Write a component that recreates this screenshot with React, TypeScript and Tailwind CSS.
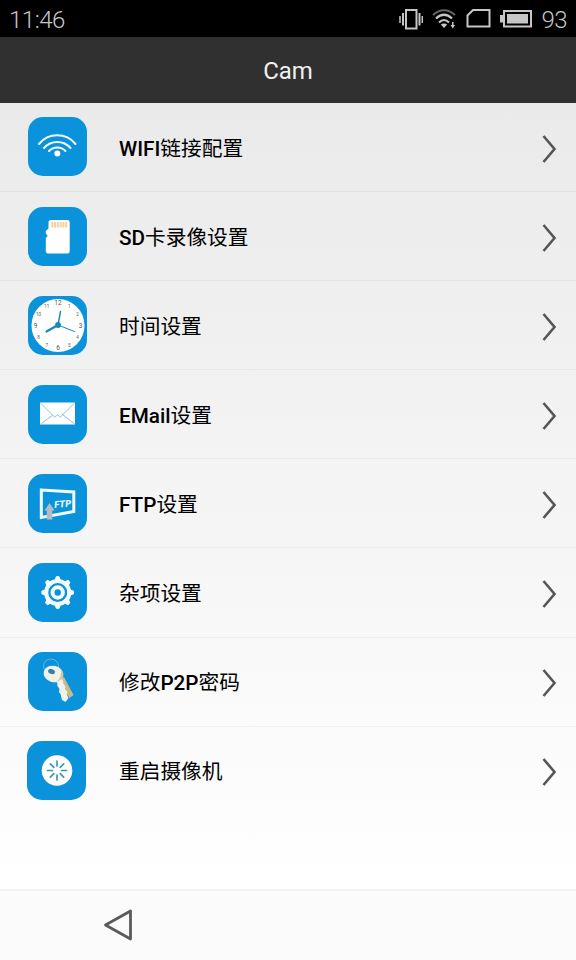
import type { ReactNode } from 'react';

const WifiIcon = () => (
  <g fill="none" stroke="#f4fbff" strokeWidth="2" strokeLinecap="round">
    <path d="M11 27A23.500 23.500 0 0 1 47.500 27" />
    <path d="M16 31A17.500 17.500 0 0 1 42.500 31" />
    <path d="M21 34A11.500 11.500 0 0 1 37.500 34" />
    <circle cx="29.300" cy="36.500" r="3" fill="#fff" stroke="none" />
  </g>
);

const SdIcon = () => (
  <g>
    <path
      d="M23 13h16.500a2.200 2.200 0 0 1 2.200 2.200v29a2.200 2.200 0 0 1-2.200 2.200H20a2.200 2.200 0 0 1-2.200-2.200V31l1.500-1.500v-1.500l-1.500-1.500V24l2.700-2.500v-6a2.500 2.500 0 0 1 2.500-2.500z"
      fill="#fff"
    />
    <path d="M24.200 15v5.500M27 15v5.500M29.800 15v5.500M32.600 15v5.500M35.400 15v5.500M38.200 15v5.500" stroke="#f7cf9f" strokeWidth="2" />
  </g>
);

const horas = [12, 1, 2, 3, 4, 5, 6, 7, 8, 9, 10, 11];

const ClockIcon = () => (
  <g>
    <circle cx="30" cy="29.500" r="26.500" fill="#fff" />
    {horas.map((h, i) => {
      const a = (i * Math.PI) / 6;
      return (
        <text
          key={h}
          x={30 + Math.sin(a) * 22.5}
          y={31.500 - Math.cos(a) * 22.5}
          textAnchor="middle"
          fontSize={h % 3 === 0 ? 6.5 : 4.5}
          fill="#555"
          fontFamily="Roboto, sans-serif"
        >
          {h}
        </text>
      );
    })}
    <g stroke="#1688bd" strokeLinecap="round">
      <path d="M30 29L18.500 35.500" strokeWidth="2.200" />
      <path d="M30 29L32.500 15.500" strokeWidth="1.400" />
      <path d="M30 29L46.500 35.500" strokeWidth="1" />
    </g>
    <circle cx="30" cy="29" r="2.900" fill="#1688bd" />
  </g>
);

const MailIcon = () => (
  <g>
    <path d="M12 17.500h35v22H12z" fill="#fff" />
    <path d="M12.500 18L26.500 32l3-2 3 2L46.500 18M12.500 39L25 30M46.500 39L34 29" fill="none" stroke="#7dbada" strokeWidth="0.900" />
  </g>
);

const FtpIcon = () => (
  <g>
    <path d="M13.300 16L45.800 18V37.500L13.300 43.500z" fill="none" stroke="#f0faff" strokeWidth="3" />
    <text
      x="26.500"
      y="34"
      fontSize="9.5"
      fontWeight="900"
      fontStyle="italic"
      fill="#e4f5ff"
      fontFamily="Roboto, sans-serif"
      transform="rotate(-5 27 34)"
    >
      FTP
    </text>
    <path d="M21.500 29L26.500 36.500H24.300V45.500H18.700V36.500H16.500z" fill="#b5bcc0" />
  </g>
);

const dientes = [0, 45, 90, 135, 180, 225, 270, 315];

const GearIcon = () => (
  <g>
    {dientes.map(d => (
      <path key={d} d="M26.400 19.500L28.300 13.700h2.800L33 19.500z" fill="#f4fbff" stroke="#f4fbff" strokeLinejoin="round" transform={`rotate(${d} 29.700 29.500)`} />
    ))}
    <circle cx="29.700" cy="29.500" r="11.600" fill="none" stroke="#f4fbff" strokeWidth="4" />
    <circle cx="29.700" cy="29.500" r="5.200" fill="none" stroke="#f4fbff" strokeWidth="4" />
  </g>
);

const KeyIcon = () => (
  <g>
    <ellipse cx="23" cy="14" rx="7.500" ry="7" fill="none" stroke="#68b2d8" strokeWidth="1" />
    <path d="M31 28L36 25L45.500 43L41.500 46L39.500 43L38 43z" fill="#cbb98a" />
    <path d="M29 29L34.500 27L35.500 32L37.500 34.500L37 37L39.500 40L38.500 42L40.500 46L37.500 50L34 48L32.500 42L31 40L31.500 37L29.500 34z" fill="#f2f2ed" />
    <ellipse cx="25.500" cy="22" rx="10" ry="8.200" fill="#f2f1e9" transform="rotate(15 25.500 22)" />
    <path d="M33 17q4 5 1 10l-5 3q5-6 4-13z" fill="#d2c7a2" />
    <ellipse cx="23.500" cy="19.500" rx="3.500" ry="2.500" fill="#347fae" transform="rotate(20 23.500 19.500)" />
  </g>
);

const RestartIcon = () => (
  <g>
    <circle cx="30" cy="29.500" r="15.300" fill="#fff" />
    {dientes.map(d => (
      <path key={d} d="M30 25V20" stroke="#3a98b5" strokeWidth="1.700" strokeLinecap="round" transform={`rotate(${d} 30 29.500)`} />
    ))}
  </g>
);

const Latin = ({ children }: { children: ReactNode }) => <span className="font-medium">{children}</span>;

const items = [
  { id: 'wifi', icon: <WifiIcon />, label: <><Latin>WIFI</Latin>链接配置</> },
  { id: 'sd', icon: <SdIcon />, label: <><Latin>SD</Latin>卡录像设置</> },
  { id: 'time', icon: <ClockIcon />, label: <>时间设置</> },
  { id: 'email', icon: <MailIcon />, label: <><Latin>EMail</Latin>设置</> },
  { id: 'ftp', icon: <FtpIcon />, label: <><Latin>FTP</Latin>设置</> },
  { id: 'misc', icon: <GearIcon />, label: <>杂项设置</> },
  { id: 'password', icon: <KeyIcon />, label: <>修改<Latin>P2P</Latin>密码</> },
  { id: 'restart', icon: <RestartIcon />, label: <>重启摄像机</> },
];

function StatusBar() {
  return (
    <div className="flex h-[37px] items-center justify-between bg-black pl-[9px] pr-[9px] text-[#c6c6c6]">
      <span className="pt-0.5 text-[24px] font-light leading-none tracking-[-0.5px]">11:46</span>
      <div className="flex items-center">
        <svg width="24" height="24" viewBox="0 0 24 24" fill="none" stroke="currentColor" className="mr-[9px]">
          <rect x="7" y="3" width="10.500" height="18.500" strokeWidth="2" />
          <path d="M4 6v12.500M20.500 6v12.500" strokeWidth="2" />
          <path d="M1 9v7M23.300 9v7" strokeWidth="1.500" />
        </svg>
        <svg width="24" height="24" viewBox="0 0 24 24" fill="none" stroke="currentColor" className="mr-[10px]">
          <path d="M1 8Q12 -1.500 23 8" strokeWidth="2" stroke="#666" />
          <path d="M4 11.500Q12 4 20 11.500" strokeWidth="2.200" />
          <path d="M7 15.500Q12 10.500 17 15.500" strokeWidth="2.200" />
          <path d="M8.800 17.500Q12 15.500 15.200 17.500L12 21z" fill="currentColor" stroke="none" />
          <path d="M20.800 15v3" strokeWidth="1.500" />
          <path d="M18.500 18h4.600l-2.300 3.500z" fill="currentColor" stroke="none" />
        </svg>
        <svg width="25" height="24" viewBox="0 0 25 24" fill="none" stroke="currentColor" className="mr-[9px]">
          <path d="M7 3H23.500V19.500H1.500V8.500z" strokeWidth="2" />
        </svg>
        <svg width="32" height="24" viewBox="0 0 32 24" fill="none" stroke="currentColor" className="mr-[9px]">
          <rect x="4" y="4" width="27" height="15.500" strokeWidth="2" />
          <path d="M0 8h3v7.500H0zM7 7h21v9.500H7z" fill="currentColor" stroke="none" />
        </svg>
        <span className="pt-0.5 text-[24px] font-light leading-none tracking-[-0.5px]">93</span>
      </div>
    </div>
  );
}

export default function App() {
  return (
    <div className="flex h-[960px] w-[576px] flex-col overflow-hidden font-[Roboto,'Noto_Sans_CJK_SC',sans-serif]">
      <StatusBar />

      <header className="flex h-[66px] items-center justify-center bg-[#303030]">
        <h1 className="pt-0.5 text-[24px] leading-none text-[#f0f0f0]">Cam</h1>
      </header>

      <main className="flex-1 bg-linear-to-b from-[#eaeaea] to-white">
        {items.map(item => (
          <button
            key={item.id}
            className={`flex h-[89.1px] w-full items-center border-b pr-[19px] text-left ${
              item.id === 'restart' ? 'border-transparent pl-[27px]' : 'border-black/4 pl-7'
            }`}
          >
            <svg width="59" height="59" viewBox="0 0 59 59" className="mb-[0.2px] shrink-0">
              <rect width="59" height="59" rx="15" fill="#0a92db" />
              {item.icon}
            </svg>
            <span className={`flex-1 pt-1 text-[20.7px] leading-none text-black ${item.id === 'restart' ? 'pl-[33px]' : 'pl-8'}`}>
              {item.label}
            </span>
            <svg width="15" height="28" viewBox="0 0 15 28" fill="none" stroke="#555" strokeWidth="2.600" className="mt-[3px]">
              <path d="M1.500 1L12.500 14L1.500 27" />
            </svg>
          </button>
        ))}
      </main>

      <nav className="flex h-[71px] items-center border-t-2 border-[#f3f3f3] bg-[#fbfbfb] pb-0.5 pl-[103px]">
        <button>
          <svg width="30" height="34" viewBox="0 0 30 34" fill="none" stroke="#5a5a5a" strokeWidth="2.800" strokeLinejoin="round">
            <path d="M2.500 17L27.500 3V31z" />
          </svg>
        </button>
      </nav>
    </div>
  );
}
